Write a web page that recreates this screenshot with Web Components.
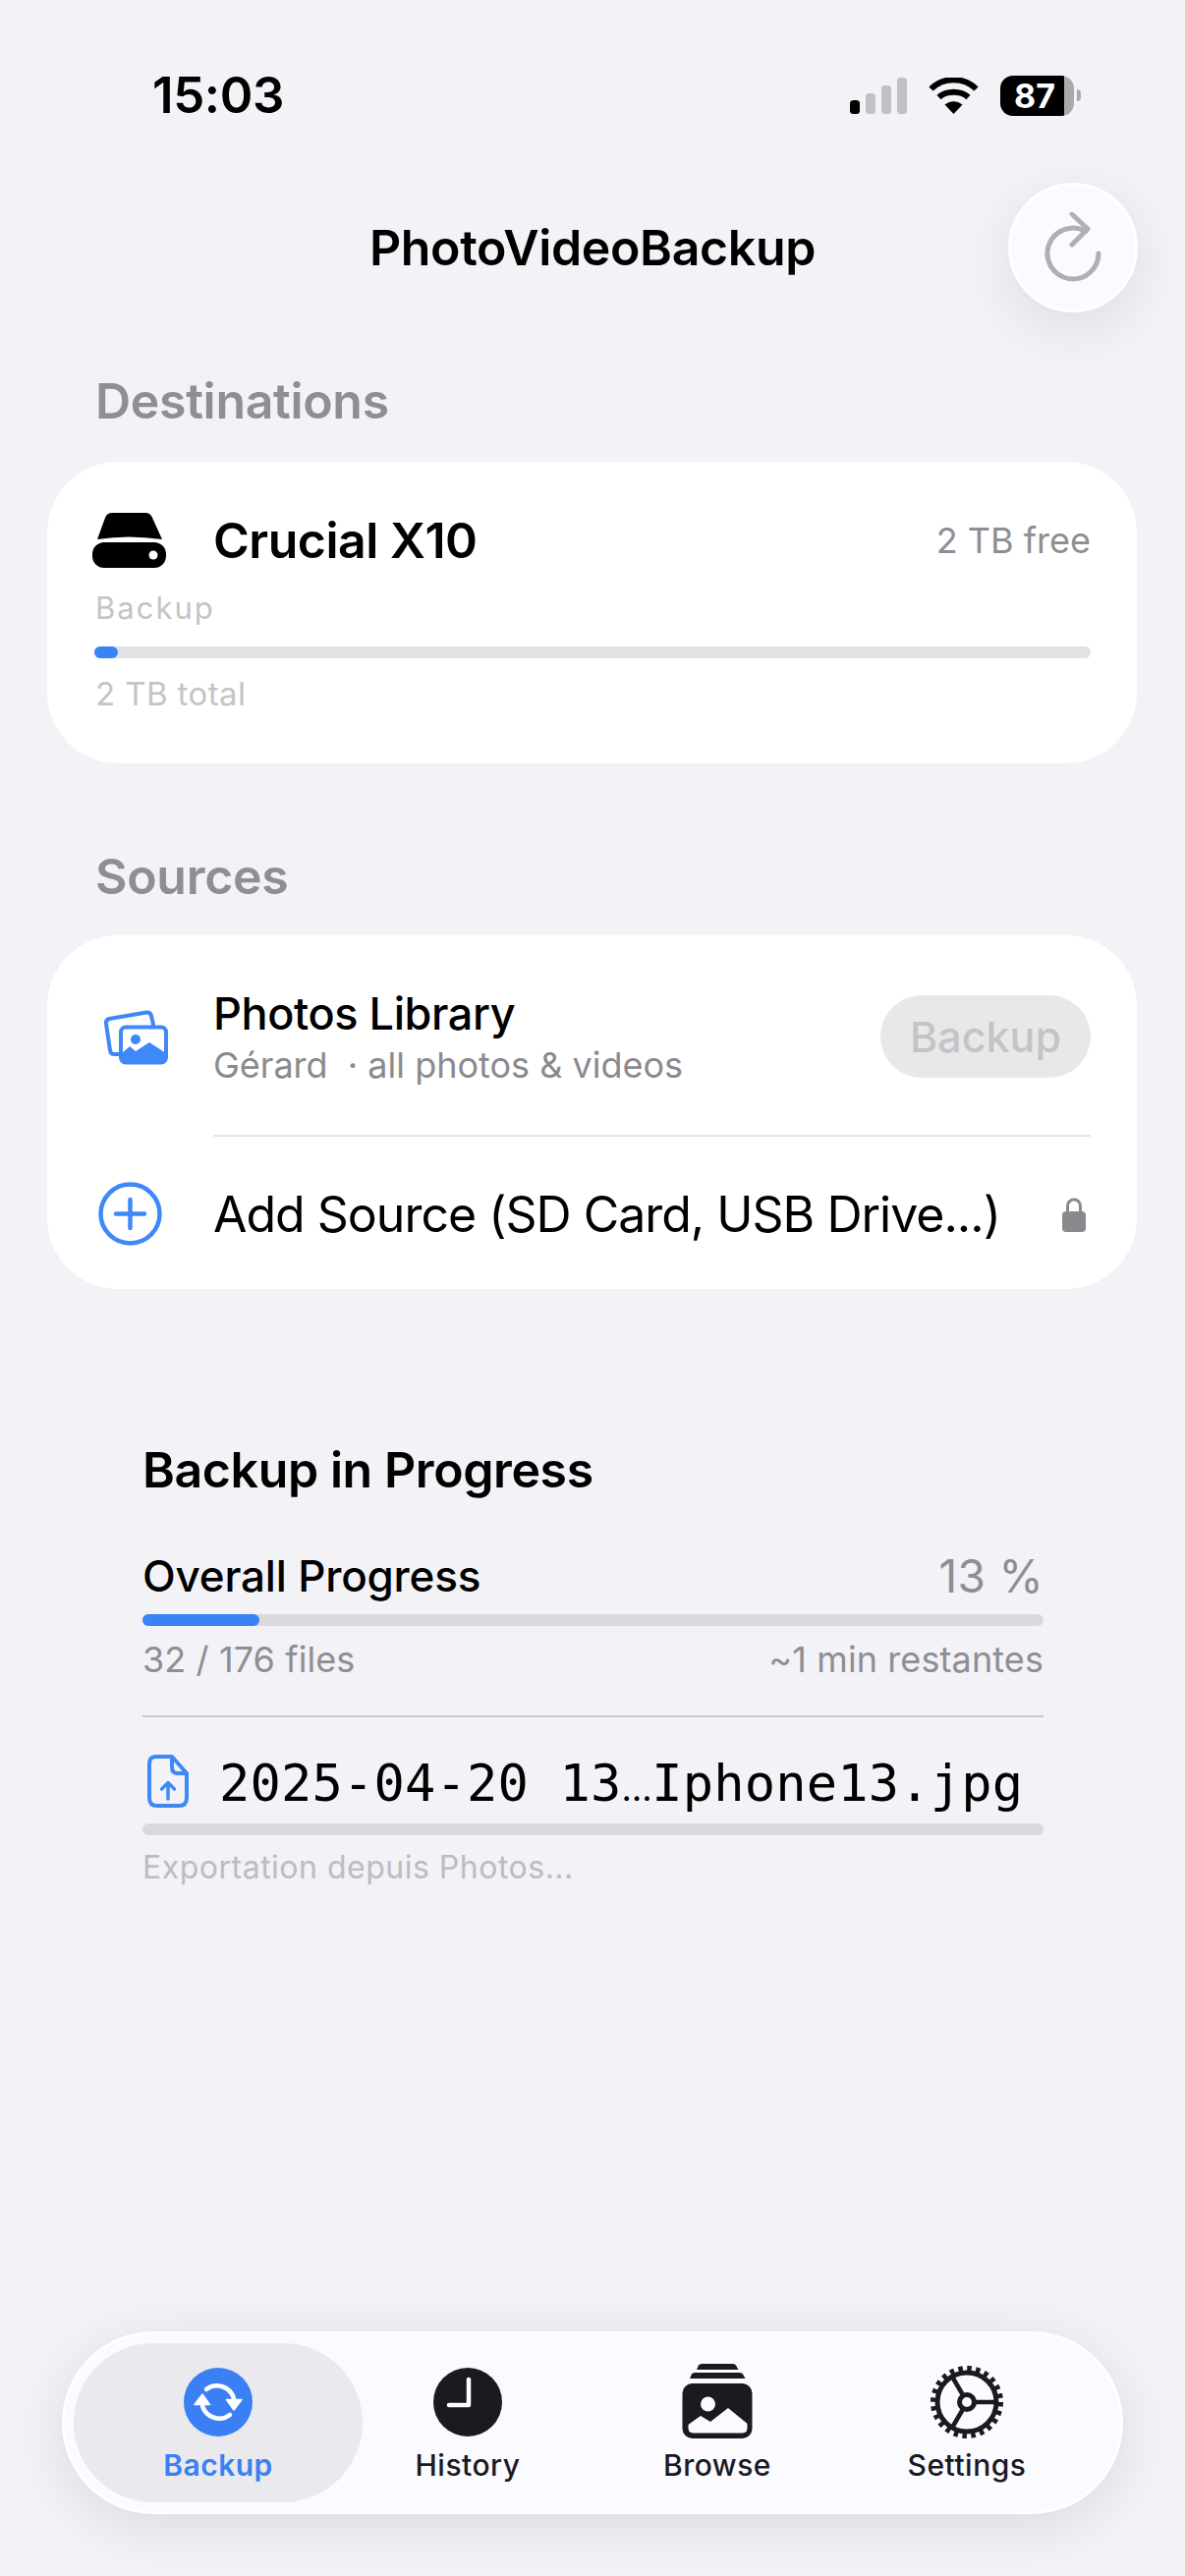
<!DOCTYPE html>
<html lang="en">
<head>
<meta charset="utf-8">
<title>PhotoVideoBackup</title>
<style>
    html, body { margin: 0; padding: 0; }
    body {
        display: flex;
        flex-direction: column;
        width: 1206px;
        height: 2622px;
        overflow: hidden;
        background: #f2f2f7;
        color: #000;
        font-family: Inter, "Noto Sans", "Liberation Sans", sans-serif;
    }
</style>
</head>
<body>

<status-bar time="15:03" battery="87"></status-bar>
<app-header title="PhotoVideoBackup"></app-header>

<section-label style="margin-top:60px">Destinations</section-label>
<storage-card name="Crucial X10" free="2 TB free" role="Backup" total="2 TB total" percent="2.4"></storage-card>

<section-label style="margin-top:85px;margin-bottom:30px">Sources</section-label>
<source-card>
    <source-row slot="library" heading="Photos Library" sub="Gérard  · all photos &amp; videos"></source-row>
    <add-row slot="add">Add Source (SD Card, USB Drive...)</add-row>
</source-card>

<progress-panel></progress-panel>

<tab-bar>
    <tab-item icon="sync" active>Backup</tab-item>
    <tab-item icon="clock">History</tab-item>
    <tab-item icon="photos">Browse</tab-item>
    <tab-item icon="gear">Settings</tab-item>
</tab-bar>

<script>
(function() {

    // helper: shadow root from a html string
    function mount(el, html) {
        const root = el.attachShadow({ mode: 'open' });
        const tpl = document.createElement('template');
        tpl.innerHTML = html;
        root.appendChild(tpl.content.cloneNode(true));
        return root;
    }

    // ------------------------------------------------------ STATUS BAR
    class StatusBar extends HTMLElement {
        connectedCallback() {
            mount(this, `
            <style>
                :host { display: flex; align-items: flex-start; justify-content: space-between; height: 186px; box-sizing: border-box; padding: 67px 106px 0 155px; }
                .time { font-size: 51px; line-height: 60px; font-weight: 600; letter-spacing: -0.4px; }
                .right { display: flex; align-items: flex-start; margin-top: 10px; }
                .signal { display: block; margin-top: 2px; }
                .wifi { display: block; margin: 2px 0 0 22px; }
                .battery { position: relative; width: 75px; height: 41px; margin-left: 22px; border-radius: 13px; background: linear-gradient(to right, #000 65px, #aaaaac 65px); color: #fff; font-size: 34px; line-height: 41px; font-weight: 700; box-sizing: border-box; padding-left: 14px; }
                .nub { width: 4px; height: 12px; margin: 14px 0 0 3px; border-radius: 0 6px 6px 0; background: #aaaaac; }
            </style>
            <div class="time">${this.getAttribute('time')}</div>
            <div class="right">
                <svg class="signal" width="58" height="37" viewBox="0 0 58 37">
                    <rect x="0" y="23" width="10" height="14" rx="3.5" fill="#000"/>
                    <rect x="16" y="16" width="10" height="21" rx="3.5" fill="#c0c0c5"/>
                    <rect x="32" y="8" width="10" height="29" rx="3.5" fill="#c0c0c5"/>
                    <rect x="48" y="0" width="10" height="37" rx="3.5" fill="#c0c0c5"/>
                </svg>
                <svg class="wifi" width="51" height="37" viewBox="0 0 51 37">
                    <path d="M2.5 11.5C15 -1 36 -1 48.5 11.5" fill="none" stroke="#000" stroke-width="6"/>
                    <path d="M10.5 20C18 13 33 13 40.5 20" fill="none" stroke="#000" stroke-width="6"/>
                    <path d="M16.5 27.5C22 23 29 23 34.5 27.5L25.5 37Z" fill="#000"/>
                </svg>
                <div class="battery">${this.getAttribute('battery')}</div>
                <div class="nub"></div>
            </div>`);
        }
    }

    // ------------------------------------------------------ HEADER
    class AppHeader extends HTMLElement {
        connectedCallback() {
            mount(this, `
            <style>
                :host { display: grid; grid-template-columns: 1fr auto 1fr; align-items: center; height: 132px; padding-right: 48px; padding-left: 48px; }
                .title { font-size: 50px; font-weight: 600; line-height: 60px; letter-spacing: -0.35px; }
                .refresh { grid-column: 3; justify-self: end; width: 132px; height: 132px; box-sizing: border-box; border-radius: 50%; background: #fbfbff; border: 3px solid #fff; box-shadow: 0 16px 60px rgba(0,0,0,.09); display: flex; align-items: center; justify-content: center; }
                svg { display: block; }
            </style>
            <div></div>
            <div class="title">${this.getAttribute('title')}</div>
            <div class="refresh">
                <svg width="66" height="76" viewBox="0 0 66 76" style="margin-top:4px">
                    <path d="M46 19.500A26 26 0 1 0 59 42" fill="none" stroke="#b0b0b4" stroke-width="5" stroke-linecap="round"/>
                    <path d="M32 2L48 17L32 33" fill="none" stroke="#b0b0b4" stroke-width="5" stroke-linecap="round" stroke-linejoin="round"/>
                </svg>
            </div>`);
        }
    }

    // ------------------------------------------------------ SECTION LABEL
    class SectionLabel extends HTMLElement {
        connectedCallback() {
            mount(this, `
            <style>
                :host { display: block; padding-left: 97px; margin-bottom: 32px; font-size: 50px; line-height: 60px; font-weight: 600; letter-spacing: -0.3px; color: #8e8e93; }
            </style>
            <slot></slot>`);
        }
    }

    // ------------------------------------------------------ DESTINATION CARD
    class StorageCard extends HTMLElement {
        connectedCallback() {
            mount(this, `
            <style>
                :host { display: block; box-sizing: border-box; width: 1109px; height: 307px; margin-left: 48px; padding: 50px 47px 0 46px; background: #fff; border-radius: 72px; }
                .head { display: flex; align-items: center; height: 60px; }
                .name { margin-left: 48px; font-size: 50px; line-height: 60px; font-weight: 600; letter-spacing: -0.5px; }
                .free { margin-left: auto; font-size: 36px; color: #8e8e93; }
                .role, .total { margin-left: 3px; font-size: 31px; line-height: 40px; color: #c4c4c6; }
                .role { margin-top: 19px; letter-spacing: 2px; }
                .total { margin-top: 16px; font-size: 33px; letter-spacing: .4px; }
                .track { height: 12px; margin: 19px 0 0 2px; border-radius: 6px; background: #e2e2e2; }
                .fill { height: 100%; border-radius: 6px; background: #3b82f6; width: ${this.getAttribute('percent')}%; }
                svg { display: block; flex: none; }
            </style>
            <div class="head">
                <svg width="75" height="56" viewBox="0 0 75 56">
                    <path d="M20 0H54Q59 0 61 5L71 27Q36 22 5 27L13 5Q15 0 20 0Z" fill="#000"/>
                    <rect x="0" y="30" width="75" height="26" rx="12" fill="#000"/>
                    <circle cx="62" cy="43" r="4.5" fill="#fff"/>
                </svg>
                <div class="name">${this.getAttribute('name')}</div>
                <div class="free">${this.getAttribute('free')}</div>
            </div>
            <div class="role">${this.getAttribute('role')}</div>
            <div class="track"><div class="fill"></div></div>
            <div class="total">${this.getAttribute('total')}</div>`);
        }
    }

    // ------------------------------------------------------ SOURCES CARD
    class SourceCard extends HTMLElement {
        connectedCallback() {
            mount(this, `
            <style>
                :host { display: block; box-sizing: border-box; width: 1109px; height: 360px; margin-left: 48px; background: #fff; border-radius: 72px; }
                .rule { height: 2px; margin: 0 47px 0 169px; background: #e4e4e4; }
            </style>
            <slot name="library"></slot>
            <div class="rule"></div>
            <slot name="add"></slot>`);
        }
    }

    class SourceRow extends HTMLElement {
        connectedCallback() {
            mount(this, `
            <style>
                :host { display: flex; align-items: center; box-sizing: border-box; height: 203px; padding: 3px 47px 0 57px; }
                svg { display: block; flex: none; margin-top: 2px; }
                .text { margin-left: 44px; flex: 1; }
                .heading { font-size: 45px; line-height: 54px; font-weight: 500; letter-spacing: -0.4px; }
                .sub { margin-top: 3px; font-size: 36px; line-height: 44px; color: #8a8a8e; white-space: pre; }
                .btn { display: flex; align-items: center; justify-content: center; width: 214px; height: 84px; margin-top: 0; border-radius: 42px; background: #e8e8e8; color: #c4c4c6; font-size: 43px; font-weight: 500; }
            </style>
            <svg width="68" height="58" viewBox="0 0 68 58">
                <path d="M16 46H11Q7.5 46 7 42L3 15Q2.5 11 6 10L44 3.5Q48 3 49 7L51 16" fill="none" stroke="#3f88f7" stroke-width="4" stroke-linecap="round"/>
                <rect x="18" y="18.5" width="46" height="36" rx="5" fill="#fff" stroke="#3f88f7" stroke-width="4"/>
                <path d="M18 46L27 38L33 43L47 34L64 45V50Q64 56 58 56H24Q18 56 18 50Z" fill="#3f88f7"/>
                <circle cx="33" cy="31" r="5" fill="#3f88f7"/>
            </svg>
            <div class="text">
                <div class="heading">${this.getAttribute('heading')}</div>
                <div class="sub">${this.getAttribute('sub')}</div>
            </div>
            <div class="btn">Backup</div>`);
        }
    }

    class AddRow extends HTMLElement {
        connectedCallback() {
            mount(this, `
            <style>
                :host { display: flex; align-items: center; box-sizing: border-box; height: 155px; padding: 2px 52px 0 52px; }
                svg { display: block; flex: none; }
                .label { margin-left: 52px; flex: 1; font-size: 50px; line-height: 60px; white-space: nowrap; letter-spacing: -1px; }
            </style>
            <svg width="65" height="65" viewBox="0 0 65 65">
                <circle cx="32.5" cy="32.5" r="30" fill="none" stroke="#3f88f7" stroke-width="4.5"/>
                <path d="M32.5 18V47M18 32.5H47" fill="none" stroke="#3f88f7" stroke-width="4.5" stroke-linecap="round"/>
            </svg>
            <div class="label"><slot></slot></div>
            <svg width="24" height="36" viewBox="0 0 24 36">
                <path d="M5.5 16V9.5a6.5 6.5 0 0 1 13 0V16" fill="none" stroke="#8a8a8e" stroke-width="3"/>
                <rect x="0" y="15" width="24" height="21" rx="4" fill="#8a8a8e"/>
            </svg>`);
        }
    }

    // ------------------------------------------------------ PROGRESS PANEL
    class ProgressPanel extends HTMLElement {
        connectedCallback() {
            mount(this, `
            <style>
                :host { display: block; margin: 154px 144px 0 145px; }
                .title { font-size: 50px; line-height: 60px; font-weight: 600; letter-spacing: -0.4px; }
                .line { display: flex; justify-content: space-between; }
                .overall { margin-top: 50px; font-size: 44px; line-height: 56px; font-weight: 500; letter-spacing: -0.2px; }
                .overall span + span { font-size: 46px; font-weight: 400; color: #8e8e93; letter-spacing: .3px; }
                .track { height: 12px; border-radius: 6px; background: #d9d9de; }
                .fill { height: 100%; width: 13%; border-radius: 6px; background: #3b82f6; }
                .counts { margin-top: 12px; font-size: 36px; line-height: 44px; color: #8e8e93; letter-spacing: .1px; }
                .rule { height: 2px; margin-top: 35px; background: #c9c9cd; }
                .file { display: flex; align-items: center; margin-top: 38px; height: 62px; }
                .file svg { display: block; flex: none; margin: 0 0 8px 5px; }
                .name { margin-left: 31px; font-family: "DejaVu Sans Mono", "Liberation Mono", monospace; font-size: 52px; line-height: 62px; letter-spacing: .2px; white-space: nowrap; }
                .name i { font-style: normal; font-family: Inter, sans-serif; font-size: 36px; letter-spacing: -1.5px; margin-right: 1px; }
                .export { margin-top: 11px; font-size: 32px; line-height: 44px; color: #bcbcc0; letter-spacing: .5px; }
            </style>
            <div class="title">Backup in Progress</div>
            <div class="line overall"><span>Overall Progress</span><span>13 %</span></div>
            <div class="track" style="margin-top:11px"><div class="fill"></div></div>
            <div class="line counts"><span>32 / 176 files</span><span>~1 min restantes</span></div>
            <div class="rule"></div>
            <div class="file">
                <svg width="42" height="54" viewBox="0 0 42 54">
                    <path d="M9 2H25L40 19V44Q40 52 32 52H10Q2 52 2 44V9Q2 2 9 2Z" fill="none" stroke="#3f88f7" stroke-width="4" stroke-linejoin="round"/>
                    <path d="M25 2V13Q25 19 31 19H40" fill="none" stroke="#3f88f7" stroke-width="4"/>
                    <path d="M21 45V29M14.5 35L21 28.5L27.5 35" fill="none" stroke="#3f88f7" stroke-width="3.5" stroke-linecap="round" stroke-linejoin="round"/>
                </svg>
                <div class="name">2025-04-20 13<i>…</i>Iphone13.jpg</div>
            </div>
            <div class="track" style="margin-top:8px"></div>
            <div class="export">Exportation depuis Photos...</div>`);
        }
    }

    // ------------------------------------------------------ TAB BAR
    class TabBar extends HTMLElement {
        connectedCallback() {
            mount(this, `
            <style>
                :host { display: grid; grid-template-columns: repeat(4, 254px); box-sizing: border-box; width: 1080px; height: 186px; margin: auto 0 63px 63px; padding: 9px 29px; background: #fafaff; border: 3px solid #fff; border-radius: 93px; box-shadow: 0 12px 60px rgba(0,0,0,.10); }
            </style>
            <slot></slot>`);
        }
    }

    // icons for the tabs, 76px high box
    const TAB_ICONS = {
        sync: `<svg width="70" height="70" viewBox="-35 -35 70 70" style="margin-top:4px">
                    <circle r="35" fill="#3a80f4"/>
                    <path d="M-12 -13A18 18 0 0 1 16 -4M12 13A18 18 0 0 1 -16 4" fill="none" stroke="#fff" stroke-width="4.5" stroke-linecap="round"/>
                    <path d="M-24 2.5H-8.5L-16 -8ZM24 -2.5H8.5L16 8Z" fill="#fff" stroke="#fff" stroke-width="1.5" stroke-linejoin="round"/>
               </svg>`,
        clock: `<svg width="70" height="70" viewBox="-35 -35 70 70" style="margin-top:4px">
                    <circle r="35" fill="#1a1a1f"/>
                    <path d="M1 -23V3H-19" fill="none" stroke="#fff" stroke-width="4.5" stroke-linecap="round" stroke-linejoin="round"/>
                </svg>`,
        photos: `<svg width="72" height="76" viewBox="0 0 72 76">
                    <path d="M15 6L17 1.5Q18 0 20 0H52Q54 0 55 1.5L57.500 6Z" fill="#1a1a1f"/>
                    <path d="M8 15L10 10.500Q11 9 13 9H59Q61 9 62 10.500L64.500 15Z" fill="#1a1a1f"/>
                    <rect x="0.500" y="20" width="71" height="56" rx="10" fill="#1a1a1f"/>
                    <circle cx="26.500" cy="41" r="7.500" fill="#fafaff"/>
                    <path d="M7 62L19 53.500L29 59.500L47 45.500L66 61V66Q66 70 62 70H11Q7 70 7 66Z" fill="#fafaff" stroke="#fafaff" stroke-width="1" stroke-linejoin="round"/>
                 </svg>`,
        gear: `<svg width="74" height="74" viewBox="-37 -37 74 74" style="margin-top:2px">
                    <circle r="33.500" fill="none" stroke="#1a1a1f" stroke-width="7" stroke-dasharray="4.4 4.37"/>
                    <circle r="30" fill="none" stroke="#1a1a1f" stroke-width="5"/>
                    <path d="M9 0H28M-4.500 -8L-15 -26M-4.500 8L-15 26" fill="none" stroke="#1a1a1f" stroke-width="4.500"/>
                    <circle r="7.500" fill="#fafaff" stroke="#1a1a1f" stroke-width="5"/>
               </svg>`
    };

    class TabItem extends HTMLElement {
        connectedCallback() {
            mount(this, `
            <style>
                :host { display: flex; flex-direction: column; align-items: center; box-sizing: border-box; height: 162px; padding-top: 21px; color: #1a1a1f; font-size: 30px; font-weight: 500; letter-spacing: .5px; }
                :host([active]) { margin: 0 -20px; border-radius: 81px; background: #e9e9ee; color: #3a80f4; font-weight: 600; }
                .icon { height: 76px; display: flex; justify-content: center; align-items: flex-start; }
                .icon svg { display: block; }
                .label { margin-top: 7px; line-height: 40px; }
            </style>
            <div class="icon">${TAB_ICONS[this.getAttribute('icon')]}</div>
            <div class="label"><slot></slot></div>`);
        }
    }

    customElements.define('status-bar', StatusBar);
    customElements.define('app-header', AppHeader);
    customElements.define('section-label', SectionLabel);
    customElements.define('storage-card', StorageCard);
    customElements.define('source-card', SourceCard);
    customElements.define('source-row', SourceRow);
    customElements.define('add-row', AddRow);
    customElements.define('progress-panel', ProgressPanel);
    customElements.define('tab-bar', TabBar);
    customElements.define('tab-item', TabItem);

})();
</script>
</body>
</html>
